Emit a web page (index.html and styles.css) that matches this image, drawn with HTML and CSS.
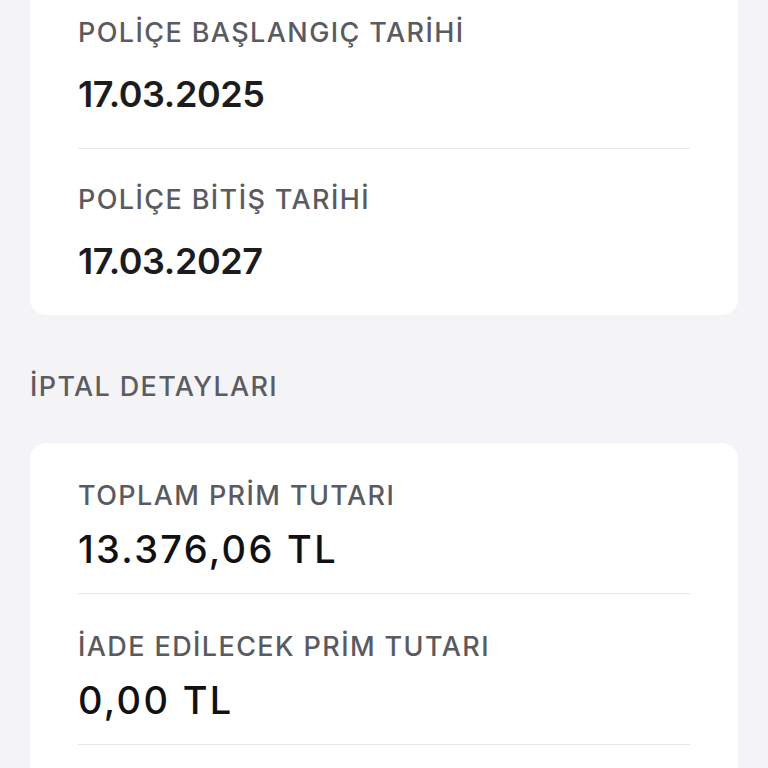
FILE: index.html
```html
<!DOCTYPE html>
<html lang="tr">
<head>
<meta charset="utf-8">
<link rel="stylesheet" href="styles.css">
</head>
<body>
<div class="page">
  <div class="card card-top">
    <div class="row">
      <div class="label">POLİÇE BAŞLANGIÇ TARİHİ</div>
      <div class="value">17.03.2025</div>
    </div>
    <div class="row">
      <div class="label">POLİÇE BİTİŞ TARİHİ</div>
      <div class="value">17.03.2027</div>
    </div>
  </div>
  <div class="section-title">İPTAL DETAYLARI</div>
  <div class="card card-bottom">
    <div class="row row-compact">
      <div class="label">TOPLAM PRİM TUTARI</div>
      <div class="value value-lg">13.376,06 TL</div>
    </div>
    <div class="row row-compact">
      <div class="label">İADE EDİLECEK PRİM TUTARI</div>
      <div class="value value-lg">0,00 TL</div>
    </div>
  </div>
</div>
</body>
</html>
```

FILE: styles.css
```css
html, body {
  margin: 0;
  padding: 0;
  background: #f4f4f7;
}
body {
  height: 768px;
  overflow: hidden;
  font-family: Inter, "Noto Sans", sans-serif;
}
.page {
  padding: 0 30px;
}
.card {
  background: #ffffff;
  border-radius: 16px;
}
.card-top {
  margin-top: -18px;
  border-top-left-radius: 0;
  border-top-right-radius: 0;
}
.card-bottom {
  padding-bottom: 80px;
}
.row {
  margin: 0 48px;
  padding: 35px 0 32px;
  border-bottom: 1.5px solid #e6e6e9;
  display: flex;
  flex-direction: column;
  gap: 23px;
}
.card-top .row:last-child {
  border-bottom: none;
  padding-bottom: 32px;
}
.row-compact {
  padding: 37px 0 22px;
  gap: 15px;
}
.label {
  font-size: 27px;
  line-height: 32px;
  font-weight: 500;
  letter-spacing: 1.4px;
  color: #5a5a61;
  white-space: nowrap;
}
.value {
  font-size: 36px;
  line-height: 44px;
  font-weight: 600;
  letter-spacing: -0.4px;
  color: #1c1c1f;
  white-space: nowrap;
}
.value-lg {
  font-size: 38px;
  font-weight: 500;
  letter-spacing: 2.3px;
  color: #111113;
}
.section-title {
  margin: 56px 0 40px;
  font-size: 27px;
  line-height: 32px;
  font-weight: 500;
  letter-spacing: 1.35px;
  color: #5c5c63;
}
```
